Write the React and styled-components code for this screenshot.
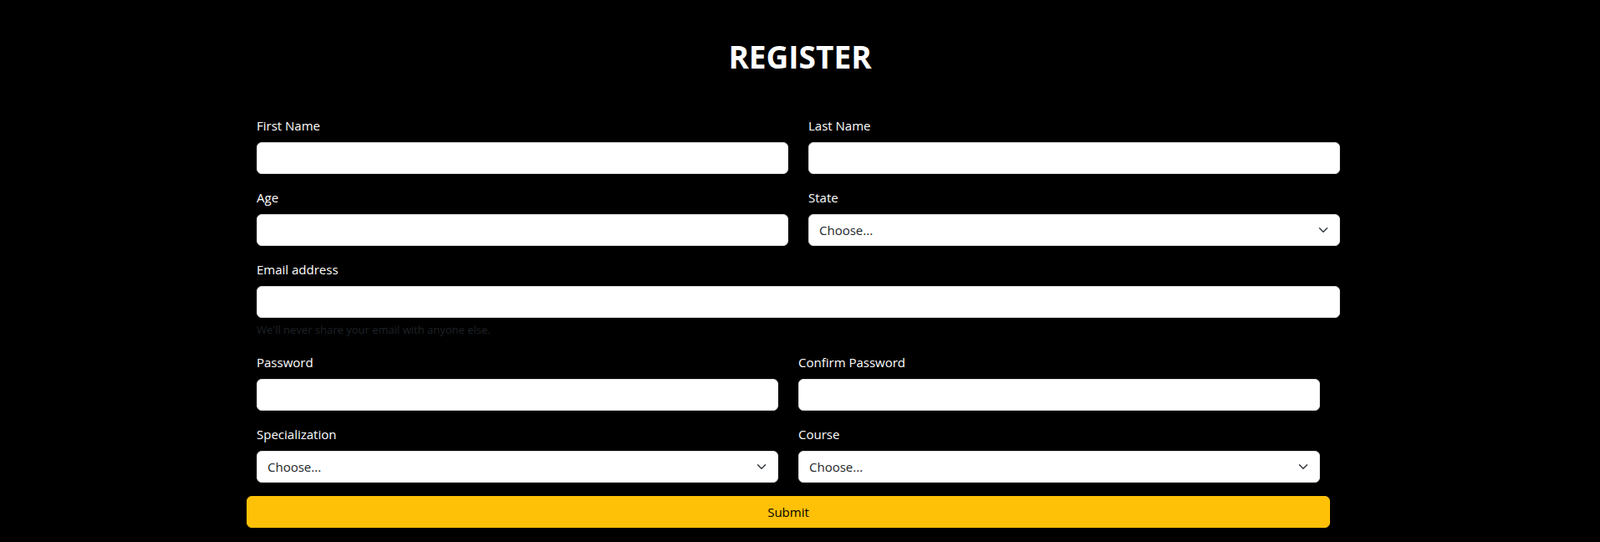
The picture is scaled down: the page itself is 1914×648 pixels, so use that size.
import React from 'react';
import styled, { createGlobalStyle } from 'styled-components';

const GlobalStyle = createGlobalStyle`
  * { box-sizing: border-box; }
  body {
    margin: 0;
    background: #000;
    font-family: "Open Sans", "Noto Sans", sans-serif;
    color: #fff;
  }
`;

const Page = styled.div`
  padding-top: 44px;
  min-height: 648px;
`;

const Title = styled.h1`
  margin: 0 0 46px;
  text-align: center;
  font-size: 37px;
  line-height: 48px;
  font-weight: 700;
  color: #fff;
`;

const Form = styled.form`
  width: 1296px;
  margin-left: calc(50% - 650px);
`;

const Grid = styled.div`
  display: grid;
  grid-template-columns: 1fr 1fr;
  column-gap: 24px;
`;

const Shifted = styled.div`
  width: 1296px;
  margin-left: -12px;
  display: grid;
  grid-template-columns: 1fr 1fr;
`;

const Group = styled.div`
  margin-bottom: 16px;
  grid-column: ${p => (p.$full ? '1 / -1' : 'auto')};
  padding: ${p => (p.$padded ? '0 12px' : '0')};
`;

const Label = styled.label`
  display: block;
  margin-bottom: 8px;
  font-size: 15px;
  line-height: 24px;
  color: #fff;
`;

const Input = styled.input`
  display: block;
  width: 100%;
  height: 38px;
  padding: 6px 12px;
  font-size: 15px;
  font-family: inherit;
  color: #212529;
  background: #fff;
  border: 1px solid #dee2e6;
  border-radius: 6px;
  outline: none;
`;

const SelectWrap = styled.div`
  position: relative;
`;

const Select = styled.select`
  display: block;
  width: 100%;
  height: 38px;
  padding: 6px 36px 6px 12px;
  font-size: 15px;
  font-family: inherit;
  color: #212529;
  background: #fff;
  border: 1px solid #dee2e6;
  border-radius: 6px;
  appearance: none;
  outline: none;
`;

const Chevron = styled.svg`
  position: absolute;
  right: 12px;
  top: 13px;
  width: 16px;
  height: 12px;
  pointer-events: none;
`;

const Help = styled.div`
  margin-top: 4px;
  font-size: 13px;
  line-height: 21px;
  color: #1e2226;
`;

const Submit = styled.button`
  grid-column: 1 / -1;
  height: 38px;
  width: 100%;
  font-family: inherit;
  font-size: 15px;
  color: #000;
  background: #ffc107;
  border: 1px solid #ffc107;
  border-radius: 6px;
  cursor: pointer;
`;

const Dropdown = ({ id }) => (
  <SelectWrap>
    <Select id={id} defaultValue="">
      <option value="">Choose...</option>
    </Select>
    <Chevron viewBox="0 0 16 16">
      <path d="m2 5 6 6 6-6" fill="none" stroke="#343a40" strokeWidth="2" strokeLinecap="round" strokeLinejoin="round" />
    </Chevron>
  </SelectWrap>
);

export default function App() {
  return (
    <Page>
      <GlobalStyle />
      <Title>REGISTER</Title>
      <Form onSubmit={e => e.preventDefault()}>
        <Grid>
          <Group>
            <Label htmlFor="first">First Name</Label>
            <Input id="first" type="text" />
          </Group>
          <Group>
            <Label htmlFor="last">Last Name</Label>
            <Input id="last" type="text" />
          </Group>
          <Group>
            <Label htmlFor="age">Age</Label>
            <Input id="age" type="number" />
          </Group>
          <Group>
            <Label htmlFor="state">State</Label>
            <Dropdown id="state" />
          </Group>
          <Group $full>
            <Label htmlFor="email">Email address</Label>
            <Input id="email" type="email" />
            <Help>We'll never share your email with anyone else.</Help>
          </Group>
        </Grid>
        <Shifted>
          <Group $padded>
            <Label htmlFor="pass">Password</Label>
            <Input id="pass" type="password" />
          </Group>
          <Group $padded>
            <Label htmlFor="confirm">Confirm Password</Label>
            <Input id="confirm" type="password" />
          </Group>
          <Group $padded>
            <Label htmlFor="spec">Specialization</Label>
            <Dropdown id="spec" />
          </Group>
          <Group $padded>
            <Label htmlFor="course">Course</Label>
            <Dropdown id="course" />
          </Group>
          <Submit type="submit">Submit</Submit>
        </Shifted>
      </Form>
    </Page>
  );
}
